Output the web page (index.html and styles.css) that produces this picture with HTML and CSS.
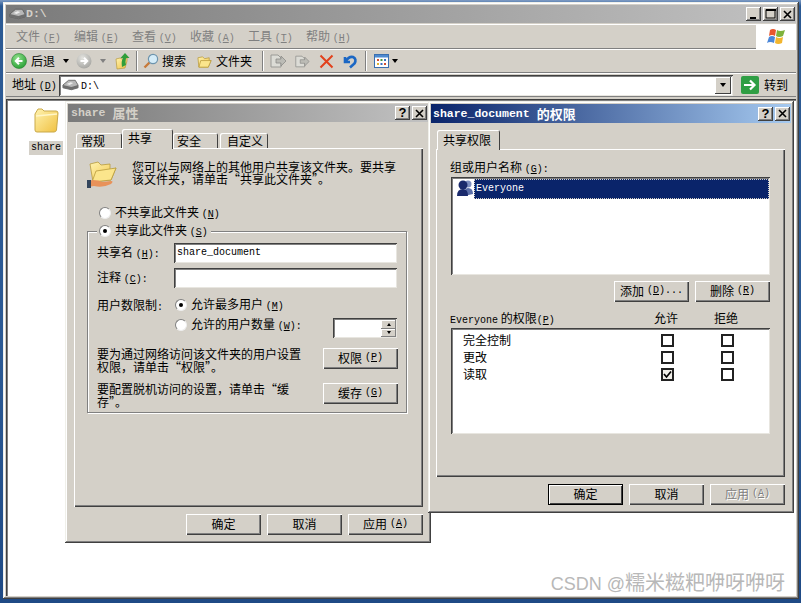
FILE: index.html
```html
<!doctype html>
<html lang="zh-CN">
<head>
    <meta charset="utf-8">
    <meta name="viewport" content="width=device-width, initial-scale=1">
    <title>D:\</title>
    <link rel="stylesheet" href="styles.css">
</head>
<body>
    <svg class="defs" width="0" height="0">
        <defs>
            <linearGradient id="folder-fill" x1="0" y1="0" x2="1" y2="1">
                <stop offset="0" stop-color="#fff3b0"/>
                <stop offset="1" stop-color="#f0c040"/>
            </linearGradient>
            <radialGradient id="green-ball" cx="0.4" cy="0.3" r="0.8">
                <stop offset="0" stop-color="#8fe08a"/>
                <stop offset="1" stop-color="#1f9a2e"/>
            </radialGradient>
            <radialGradient id="grey-ball" cx="0.4" cy="0.3" r="0.8">
                <stop offset="0" stop-color="#e4e4e0"/>
                <stop offset="1" stop-color="#a0a09c"/>
            </radialGradient>
            <symbol id="drive" viewBox="0 0 18 12">
                <path d="M1 6 L7 1 L14 1 L17 6 L17 9 L10 11 L1 9 Z" fill="#b8b8b8" stroke="#555" stroke-width=".8"/>
                <path d="M1 6 L10 8 L17 6 L17 9 L10 11 L1 9 Z" fill="#6e6e6e"/>
                <path d="M5 5 L9 3 L12 4 L8 6 Z" fill="#eee"/>
            </symbol>
            <symbol id="open-folder" viewBox="0 0 16 16">
                <path d="M1 4 L6 3 L8 5 L13 4 L13 7 L15 7 L12 14 L2 14 Z" fill="url(#folder-fill)" stroke="#b89a3c" stroke-width=".8"/>
                <path d="M2 14 L4 7 L15 7 L12 14 Z" fill="#fbe58c" stroke="#b89a3c" stroke-width=".8"/>
            </symbol>
            <symbol id="page-arrow" viewBox="0 0 18 16">
                <path d="M2 2 H9 L12 5 V14 H2 Z" fill="#dcdcd6" stroke="#9a9a96"/>
                <path d="M7 6 H12 V3 L17 8 L12 13 V10 H7 Z" fill="#bcbcb6" stroke="#8c8c88" stroke-width=".8"/>
            </symbol>
        </defs>
    </svg>

    <main class="desktop">
        <section class="explorer">
            <header class="title title-off">
                <svg class="title-icon" width="17" height="12"><use href="#drive"/></svg>
                <span class="title-latin">D:\</span>
                <div class="caption-btns">
                    <span class="cap"><svg width="9" height="9"><rect x="1" y="7" width="6" height="2" fill="#000"/></svg></span>
                    <span class="cap"><svg width="11" height="10"><rect x="1" y="1" width="9" height="8" fill="none" stroke="#000"/><rect x="1" y="0" width="10" height="2" fill="#000"/></svg></span>
                    <span class="cap"><svg width="10" height="9"><path d="M1 1 L8 8 M8 1 L1 8" stroke="#000" stroke-width="1.6"/></svg></span>
                </div>
            </header>

            <nav class="menubar">
                <span class="menu-item">文件 <span class="k">(<u>F</u>)</span></span>
                <span class="menu-item">编辑 <span class="k">(<u>E</u>)</span></span>
                <span class="menu-item">查看 <span class="k">(<u>V</u>)</span></span>
                <span class="menu-item">收藏 <span class="k">(<u>A</u>)</span></span>
                <span class="menu-item">工具 <span class="k">(<u>T</u>)</span></span>
                <span class="menu-item">帮助 <span class="k">(<u>H</u>)</span></span>
                <div class="logo-box">
                    <svg width="20" height="18" viewBox="0 0 20 18">
                        <path d="M4 2 Q7 0 10 2 L9 8 Q6 6 3 8 Z" fill="#e8562c"/>
                        <path d="M11 2 Q14 4 19 2 L17 8 Q13 10 10 8 Z" fill="#7fb23a"/>
                        <path d="M3 9 Q6 7 9 9 L8 15 Q4 13 1 15 Z" fill="#4a86d8"/>
                        <path d="M10 9 Q13 11 17 9 L16 15 Q12 17 9 15 Z" fill="#f2b52e"/>
                    </svg>
                </div>
            </nav>

            <div class="toolbar">
                <svg class="t-back" width="16" height="16" viewBox="0 0 16 16"><circle cx="8" cy="8" r="7.5" fill="url(#green-ball)" stroke="#2a7f30" stroke-width=".6"/><path d="M11.5 8 H5 M8 4.8 L4.8 8 L8 11.2" fill="none" stroke="#fff" stroke-width="2"/></svg>
                <span class="t-label">后退</span>
                <span class="arrow t-back-arrow"></span>
                <svg class="t-forward" width="16" height="16" viewBox="0 0 16 16"><circle cx="8" cy="8" r="7.5" fill="url(#grey-ball)"/><path d="M4.5 8 H11 M8 4.8 L11.2 8 L8 11.2" fill="none" stroke="#fff" stroke-width="2"/></svg>
                <span class="arrow arrow-off t-forward-arrow"></span>
                <svg class="t-up" width="15" height="18" viewBox="0 0 15 18"><path d="M1 7 L5 6 L7 7 L12 6 L12 9 L10 16 L2 17 Z" fill="url(#folder-fill)" stroke="#b89a3c" stroke-width=".7"/><path d="M7 15 Q6 9 8 6 L5.500 6 L10 1 L14.500 6 L11 6 Q10 10 11 13 Z" fill="#2f9e3a"/></svg>
                <span class="sep t-sep-1"></span>
                <svg class="t-search" width="16" height="16" viewBox="0 0 16 16"><path d="M1.5 14.5 L6.5 9.5" stroke="#c77a3a" stroke-width="2.4"/><circle cx="10" cy="6" r="4.6" fill="#d5ecf8" stroke="#6d94ad" stroke-width="1.2"/></svg>
                <span class="t-label t-search-label">搜索</span>
                <svg class="t-folders" width="15" height="15"><use href="#open-folder"/></svg>
                <span class="t-label t-folders-label">文件夹</span>
                <span class="sep t-sep-2"></span>
                <svg class="t-move" width="18" height="16"><use href="#page-arrow"/></svg>
                <svg class="t-copy" width="16" height="15"><use href="#page-arrow"/></svg>
                <svg class="t-delete" width="15" height="15" viewBox="0 0 15 15"><path d="M1.5 1.5 L13.5 13.5 M13.5 1.5 L1.5 13.5" stroke="#e2411c" stroke-width="2"/></svg>
                <svg class="t-undo" width="16" height="15" viewBox="0 0 16 15"><path d="M3 3 L3 8 L8 8 M3.5 7.5 Q7 2 11 3 Q15 5 12.5 9.5 L8 13.5" fill="none" stroke="#1b67c4" stroke-width="2.6"/></svg>
                <span class="sep t-sep-3"></span>
                <svg class="t-views" width="15" height="14" viewBox="0 0 15 14"><rect x=".5" y=".5" width="14" height="13" fill="#fff" stroke="#3a6fb0"/><rect x="1" y="1" width="13" height="2.5" fill="#4d8ad0"/><path d="M3 5h2v2H3z" fill="#d05030"/><path d="M6.5 5h2v2h-2z" fill="#4a9a40"/><path d="M10 5h2v2h-2z" fill="#3a70c0"/><path d="M3 9h2v2H3z" fill="#e0b030"/><path d="M6.5 9h2v2h-2z" fill="#3a70c0"/><path d="M10 9h2v2h-2z" fill="#d05030"/></svg>
                <span class="arrow t-views-arrow"></span>
            </div>

            <div class="addressbar">
                <span class="address-label">地址 <span class="k">(<u>D</u>)</span></span>
                <div class="address-input sunken">
                    <svg width="17" height="12"><use href="#drive"/></svg>
                    <span class="latin">D:\</span>
                    <span class="combo-btn"><span class="arrow"></span></span>
                </div>
                <svg class="go-icon" width="18" height="18" viewBox="0 0 18 18"><rect width="18" height="18" rx="2" fill="#2f9e44"/><path d="M3 9 H13 M9 4.5 L13.5 9 L9 13.5" fill="none" stroke="#fff" stroke-width="2.2"/></svg>
                <span class="go-label">转到</span>
            </div>

            <div class="files">
                <div class="file">
                    <svg width="26" height="25" viewBox="0 0 26 25">
                        <path d="M2 6 L2 22 Q2 24 4 24 L21 24 Q23 24 23.500 22 L25 5 Q25 3 23 3 L11 3 L9 1 L5 1 Z" fill="url(#folder-fill)" stroke="#c9a94a"/>
                        <path d="M3 8 L24 6" stroke="#fff6c8" stroke-width="1.500"/>
                    </svg>
                    <span class="file-name latin">share</span>
                </div>
            </div>
        </section>

        <section class="dialog dialog-props">
            <header class="title title-off">
                <span class="title-latin">share</span><span class="title-cjk">属性</span>
                <div class="caption-btns">
                    <span class="cap cap-help">?</span>
                    <span class="cap"><svg width="10" height="9"><path d="M1 1 L8 8 M8 1 L1 8" stroke="#000" stroke-width="1.6"/></svg></span>
                </div>
            </header>
            <div class="dialog-body">
                <div class="tabs">
                    <span class="tab tab-general">常规</span>
                    <span class="tab tab-on">共享</span>
                    <span class="tab tab-safe">安全</span>
                    <span class="tab tab-custom">自定义</span>
                </div>
                <div class="panel">
                    <div class="intro">
                        <svg width="30" height="28" viewBox="0 0 30 28">
                            <path d="M3 4 L11 2 L14 5 L23 4 L23 10 L29 8 L24 20 L6 22 Z" fill="url(#folder-fill)" stroke="#b89a3c" stroke-width=".8"/>
                            <path d="M5 22 L9 11 L29 8 L24 20 Z" fill="#fbe58c" stroke="#b89a3c" stroke-width=".8"/>
                            <path d="M1 21 L6 20 Q12 20 15 22 L24 21 Q27 21 24 24 Q16 28 7 26 L1 27 Z" fill="#e8925a"/>
                            <rect x="0" y="20" width="4" height="8" fill="#34465c"/>
                        </svg>
                        <p>您可以与网络上的其他用户共享该文件夹。要共享<br>该文件夹，请单击“共享此文件夹”。</p>
                    </div>
                    <div class="radio-row radio-none">
                        <span class="radio"></span>
                        <span class="radio-text">不共享此文件夹 <span class="k">(<u>N</u>)</span></span>
                    </div>
                    <div class="group">
                        <div class="legend radio-row">
                            <span class="radio radio-on"></span>
                            <span class="radio-text">共享此文件夹 <span class="k">(<u>S</u>)</span></span>
                        </div>
                        <div class="field">
                            <label>共享名 <span class="k">(<u>H</u>):</span></label>
                            <span class="input sunken latin">share_document</span>
                        </div>
                        <div class="field">
                            <label>注释 <span class="k">(<u>C</u>):</span></label>
                            <span class="input sunken"></span>
                        </div>
                        <div class="limits">
                            <span class="limits-label">用户数限制<span class="k">:</span></span>
                            <div class="limits-options">
                                <div class="radio-row">
                                    <span class="radio radio-on"></span>
                                    <span class="radio-text">允许最多用户 <span class="k">(<u>M</u>)</span></span>
                                </div>
                                <div class="limit-count">
                                    <div class="radio-row">
                                        <span class="radio"></span>
                                        <span class="radio-text">允许的用户数量 <span class="k">(<u>W</u>):</span></span>
                                    </div>
                                    <div class="spin sunken">
                                        <div class="spin-btns">
                                            <span class="spin-btn"><span class="arrow arrow-up"></span></span>
                                            <span class="spin-btn"><span class="arrow"></span></span>
                                        </div>
                                    </div>
                                </div>
                            </div>
                        </div>
                        <div class="note note-perm">
                            <p>要为通过网络访问该文件夹的用户设置<br>权限，请单击“权限”。</p>
                            <button class="btn">权限 <span class="k">(<u>P</u>)</span></button>
                        </div>
                        <div class="note note-cache">
                            <p>要配置脱机访问的设置，请单击“缓<br>存”。</p>
                            <button class="btn">缓存 <span class="k">(<u>G</u>)</span></button>
                        </div>
                    </div>
                </div>
                <footer class="dialog-btns">
                    <button class="btn">确定</button>
                    <button class="btn">取消</button>
                    <button class="btn">应用 <span class="k">(<u>A</u>)</span></button>
                </footer>
            </div>
        </section>

        <section class="dialog dialog-perm">
            <header class="title title-on">
                <span class="title-latin">share_document</span><span class="title-cjk">的权限</span>
                <div class="caption-btns">
                    <span class="cap cap-help">?</span>
                    <span class="cap"><svg width="10" height="9"><path d="M1 1 L8 8 M8 1 L1 8" stroke="#000" stroke-width="1.6"/></svg></span>
                </div>
            </header>
            <div class="dialog-body">
                <div class="tabs">
                    <span class="tab tab-on tab-single">共享权限</span>
                </div>
                <div class="panel panel-perm">
                    <div class="perm-label">组或用户名称 <span class="k">(<u>G</u>):</span></div>
                    <div class="user-list sunken">
                        <svg width="18" height="18" viewBox="0 0 18 18">
                            <circle cx="12" cy="5" r="3.500" fill="#7d8fc0"/>
                            <path d="M8 17 Q8 9 12 9 Q17 9 17 15 Z" fill="#5a6ea8"/>
                            <circle cx="7" cy="6" r="4.500" fill="#1a2a6c"/>
                            <path d="M1 17 Q1 10 7 10 Q12 10 12 17 Z" fill="#1a2a6c"/>
                        </svg>
                        <span class="user-row latin">Everyone</span>
                    </div>
                    <div class="list-btns">
                        <button class="btn">添加 <span class="k">(<u>D</u>)...</span></button>
                        <button class="btn">删除 <span class="k">(<u>R</u>)</span></button>
                    </div>
                    <div class="perm-head">
                        <span class="perm-name"><span class="latin">Everyone</span> 的权限<span class="k">(<u>P</u>)</span></span>
                        <span class="perm-col">允许</span>
                        <span class="perm-col">拒绝</span>
                    </div>
                    <div class="perm-list sunken">
                        <div class="perm-row">
                            <span class="perm-name">完全控制</span>
                            <span class="perm-col"><span class="check"></span></span>
                            <span class="perm-col"><span class="check"></span></span>
                        </div>
                        <div class="perm-row">
                            <span class="perm-name">更改</span>
                            <span class="perm-col"><span class="check"></span></span>
                            <span class="perm-col"><span class="check"></span></span>
                        </div>
                        <div class="perm-row">
                            <span class="perm-name">读取</span>
                            <span class="perm-col">
                                <span class="check check-on"><svg width="9" height="9" viewBox="0 0 9 9"><path d="M1 4 L3.500 7 L8 1.500" fill="none" stroke="#000" stroke-width="1.700"/></svg></span>
                            </span>
                            <span class="perm-col"><span class="check"></span></span>
                        </div>
                    </div>
                </div>
                <footer class="dialog-btns">
                    <button class="btn btn-default">确定</button>
                    <button class="btn">取消</button>
                    <button class="btn btn-off">应用 <span class="k">(<u>A</u>)</span></button>
                </footer>
            </div>
        </section>

        <div class="watermark"><span class="watermark-latin">CSDN @</span>糯米糍粑咿呀咿呀</div>
    </main>
</body>
</html>
```

FILE: styles.css
```css
* {
    box-sizing: border-box;
}
html, body {
    margin: 0;
    height: 100%;
}
body {
    overflow: hidden;
    background: #2c5a94;
    font-family: "Noto Sans CJK SC", "Liberation Sans", sans-serif;
    font-size: 12px;
    line-height: 14px;
    color: #000;
}
p {
    margin: 0;
    white-space: nowrap;
}
.defs {
    position: absolute;
}
.desktop {
    position: relative;
    width: 801px;
    height: 603px;
    background: linear-gradient(#7f9cc4, #2c5a94 1%, #2c5a94 60%, #1f4a85);
}

/* small latin text, half the width of a hanzi */
.k, .latin {
    font-family: "Liberation Mono", monospace;
    font-size: 10px;
    line-height: 10px;
}

/* windows */
.explorer, .dialog {
    position: absolute;
    display: flex;
    flex-direction: column;
    padding: 3px;
    background: #d4d0c8;
    box-shadow: inset -1px -1px 0 #404040, inset 1px 1px 0 #f0f0ea, inset -2px -2px 0 #808080, inset 2px 2px 0 #fff;
}
.explorer {
    left: 3px;
    top: 2px;
    width: 796px;
    height: 597px;
}
.dialog-props {
    left: 65px;
    top: 101px;
    width: 366px;
    height: 442px;
}
.dialog-perm {
    left: 428px;
    top: 101px;
    width: 366px;
    height: 412px;
}

/* title bars */
.title {
    flex: none;
    display: flex;
    align-items: center;
    height: 18px;
    padding-left: 3px;
    font-weight: bold;
}
.title-off {
    background: linear-gradient(90deg, #7a7a7a, #c2c2c2);
    color: #d4d0c8;
}
.title-on {
    height: 19px;
    padding-left: 2px;
    background: linear-gradient(90deg, #0a246a, #a6caf0);
    color: #fff;
}
.title-latin {
    font-family: "Liberation Mono", monospace;
    font-size: 11.5px;
}
.title-cjk {
    margin-left: 7px;
    font-size: 13px;
}
.caption-btns {
    display: flex;
    gap: 2px;
    margin-left: auto;
    padding-right: 1px;
}
.cap {
    display: flex;
    align-items: center;
    justify-content: center;
    width: 15px;
    height: 14px;
    background: #d4d0c8;
    box-shadow: inset -1px -1px 0 #404040, inset 1px 1px 0 #fff, inset -2px -2px 0 #808080;
}
.cap-help {
    font-family: "Liberation Sans", sans-serif;
    font-size: 13px;
    color: #000;
}

/* menu bar */
.menubar {
    flex: none;
    display: flex;
    align-items: center;
    height: 25px;
    padding-left: 10px;
    margin-top: 1px;
    border-top: 1px solid #fff;
    border-bottom: 1px solid #808080;
    color: #808080;
}
.menu-item {
    width: 58px;
    white-space: nowrap;
}
.logo-box {
    display: flex;
    align-items: center;
    justify-content: center;
    width: 40px;
    height: 24px;
    margin-left: auto;
    background: #fff;
}

/* tool bar */
.toolbar {
    flex: none;
    display: flex;
    align-items: center;
    height: 24px;
    padding-left: 5px;
    border-top: 1px solid #fff;
    border-bottom: 1px solid #808080;
}
.t-label {
    margin-left: 4px;
    white-space: nowrap;
}
.arrow {
    display: inline-block;
    width: 0;
    height: 0;
    border-left: 3.5px solid transparent;
    border-right: 3.5px solid transparent;
    border-top: 4px solid #000;
}
.arrow-off {
    border-left-width: 3px;
    border-right-width: 3px;
    border-top-color: #808080;
}
.arrow-up {
    border-top: 0;
    border-bottom: 3px solid #000;
    border-left-width: 2.5px;
    border-right-width: 2.5px;
}
.spin-btn .arrow:not(.arrow-up) {
    border-top-width: 3px;
    border-left-width: 2.5px;
    border-right-width: 2.5px;
}
.sep {
    width: 2px;
    height: 20px;
    background: #808080;
    border-right: 1px solid #fff;
}
.t-back-arrow { margin-left: 8px; }
.t-forward { margin-left: 7px; }
.t-forward-arrow { margin-left: 8px; }
.t-up { margin-left: 9px; }
.t-sep-1 { margin-left: 6px; }
.t-search { margin-left: 5px; }
.t-search-label { margin-left: 3px; }
.t-folders { margin-left: 11px; }
.t-folders-label { margin-left: 4px; }
.t-sep-2 { margin-left: 10px; }
.t-move { margin-left: 5px; }
.t-copy { margin-left: 7px; }
.t-delete { margin-left: 9px; }
.t-undo { margin-left: 8px; }
.t-sep-3 { margin-left: 7px; }
.t-views { margin-left: 7px; }
.t-views-arrow { margin-left: 3px; }

/* address bar */
.addressbar {
    flex: none;
    display: flex;
    align-items: center;
    height: 24px;
    padding-left: 6px;
    border-top: 1px solid #fff;
    border-bottom: 1px solid #808080;
}
.address-label {
    width: 47px;
    padding-bottom: 2px;
    white-space: nowrap;
}
.sunken {
    background: #fff;
    box-shadow: inset 1px 1px 0 #404040, inset -1px -1px 0 #e8e6e0, inset 2px 2px 0 #808080;
}
.address-input {
    display: flex;
    align-items: center;
    gap: 2px;
    width: 674px;
    height: 21px;
    padding: 0 2px 0 3px;
}
.address-input .latin {
    padding-top: 3px;
}
.combo-btn {
    display: flex;
    align-items: center;
    justify-content: center;
    width: 16px;
    height: 17px;
    margin-left: auto;
    background: #d4d0c8;
    box-shadow: inset -1px -1px 0 #404040, inset 1px 1px 0 #fff;
}
.go-icon {
    margin-left: 8px;
}
.go-label {
    margin-left: 5px;
}

/* file view */
.files {
    flex: 1;
    margin-top: 2px;
    padding: 9px 0 0 23px;
    background: #fff;
    box-shadow: inset 1px 1px 0 #404040, inset 2px 2px 0 #808080;
}
.file {
    display: flex;
    flex-direction: column;
    align-items: center;
    width: 34px;
}
.file-name {
    width: 34px;
    height: 14px;
    margin-top: 8px;
    background: #d4d0c8;
    text-align: center;
    line-height: 14px;
}

/* dialog frame */
.dialog-body {
    flex: 1;
    display: flex;
    flex-direction: column;
    min-height: 0;
    padding: 7px 5px 5px 5px;
}
.dialog-props .dialog-body {
    padding-left: 6px;
}
.dialog-perm .dialog-body {
    padding-right: 6px;
}
.tabs {
    flex: none;
    display: flex;
    align-items: flex-end;
    height: 19px;
}
.tab {
    display: flex;
    align-items: center;
    height: 15px;
    background: #d4d0c8;
    border-radius: 2px 2px 0 0;
    box-shadow: inset 1px 1px 0 #fff, inset -1px 0 0 #404040;
}
.tab-general {
    width: 46px;
    margin-left: 2px;
    padding-left: 5px;
}
.tab-on {
    position: relative;
    z-index: 1;
    width: 51px;
    height: 20px;
    margin-bottom: -1px;
    padding: 0 0 2px 6px;
}
.tab-safe {
    width: 45px;
    padding-left: 4px;
}
.tab-custom {
    width: 48px;
    margin-left: 2px;
    padding-left: 7px;
}
.tab-single {
    width: 63px;
    margin-left: 1px;
    padding-bottom: 1px;
}
.panel {
    flex: 1;
    padding: 1px;
    box-shadow: inset 1px 1px 0 #fff, inset -1px -1px 0 #404040, inset -2px -2px 0 #808080;
}
.dialog-btns {
    flex: none;
    display: flex;
    justify-content: flex-end;
    gap: 6px;
    margin-top: 7px;
}
.btn {
    display: flex;
    align-items: center;
    justify-content: center;
    gap: 3px;
    width: 75px;
    height: 21px;
    padding: 0 0 2px;
    border: 0;
    background: #d4d0c8;
    font: inherit;
    color: #000;
    box-shadow: inset 1px 1px 0 #fff, inset -1px -1px 0 #404040, inset -2px -2px 0 #808080;
}
.btn-default {
    box-shadow: inset 0 0 0 1px #000, inset 2px 2px 0 #fff, inset -2px -2px 0 #404040;
}
.btn-off {
    color: #808080;
    text-shadow: 1px 1px 0 #fff;
}

/* radios and checks */
.radio-row {
    display: flex;
    align-items: center;
    gap: 4px;
    height: 14px;
    white-space: nowrap;
}
.radio-text {
    margin-bottom: 2px;
}
.radio {
    flex: none;
    display: flex;
    align-items: center;
    justify-content: center;
    width: 12px;
    height: 12px;
    border-radius: 50%;
    background: #fff;
    border: 1px solid;
    border-color: #808080 #eee #eee #808080;
}
.radio-on::after {
    content: "";
    width: 4px;
    height: 4px;
    border-radius: 50%;
    background: #000;
}
.check {
    display: inline-flex;
    align-items: center;
    justify-content: center;
    width: 13px;
    height: 13px;
    border: 2px solid #222;
    background: #fff;
    vertical-align: middle;
}
.check-on {
    background: #f0eee8;
}

/* share tab */
.intro {
    display: flex;
    gap: 15px;
    margin: 11px 0 0 12px;
}
.intro p {
    padding-top: 1px;
    line-height: 12px;
}
.radio-none {
    margin: 18px 0 0 24px;
}
.group {
    height: 182px;
    width: 320px;
    margin: 11px 0 0 12px;
    border: 1px solid #808080;
    box-shadow: 1px 1px 0 #fff, inset 1px 1px 0 #fff;
}
.legend {
    width: 114px;
    height: 14px;
    margin: -8px 0 1px 9px;
    padding-left: 2px;
    background: #d4d0c8;
}
.field {
    display: flex;
    align-items: center;
    height: 20px;
    margin-top: 5px;
    padding-left: 9px;
    white-space: nowrap;
}
.field label {
    width: 77px;
    margin-bottom: 1px;
}
.input {
    width: 223px;
    height: 20px;
    padding: 0 3px;
    line-height: 20px;
}
.limits {
    display: flex;
    margin-top: 10px;
    padding: 0 9px;
}
.limits-label {
    width: 77px;
    white-space: nowrap;
}
.limits-options {
    flex: 1;
    margin-left: 1px;
}
.limit-count {
    display: flex;
    justify-content: space-between;
    margin-top: 6px;
}
.spin {
    display: flex;
    justify-content: flex-end;
    width: 64px;
    height: 20px;
    padding: 2px 1px 1px;
}
.spin-btns {
    display: flex;
    flex-direction: column;
    width: 15px;
}
.spin-btn {
    flex: 1;
    display: flex;
    align-items: center;
    justify-content: center;
    background: #d4d0c8;
    box-shadow: inset -1px -1px 0 #808080, inset 1px 1px 0 #fff;
}
.note {
    display: flex;
    justify-content: space-between;
    padding: 0 8px 0 9px;
    line-height: 13px;
}
.note p {
    margin-top: -1px;
    line-height: 13px;
}
.note-perm {
    margin-top: 10px;
}
.note-cache {
    margin-top: 10px;
}

/* permissions dialog */
.panel-perm {
    padding: 12px 14px 0 14px;
}
.perm-label {
    margin-top: -1px;
}
.user-list {
    display: flex;
    align-items: flex-start;
    width: 319px;
    height: 98px;
    margin: 2px 0 0 1px;
    padding: 2px 1px 0 5px;
}
.user-row {
    flex: 1;
    height: 20px;
    padding-left: 2px;
    background: #0a246a;
    outline: 1px dotted #d4d0c8;
    outline-offset: -1px;
    color: #fff;
    line-height: 20px;
}
.list-btns {
    display: flex;
    justify-content: flex-end;
    gap: 6px;
    margin-top: 6px;
    width: 320px;
}
.perm-head, .perm-row {
    display: flex;
    align-items: center;
}
.perm-head {
    width: 320px;
    height: 14px;
    margin-top: 9px;
    padding-right: 14px;
}
.perm-name {
    flex: 1;
    white-space: nowrap;
}
.perm-row .perm-name {
    margin-bottom: 2px;
}
.perm-col {
    flex: none;
    display: flex;
    justify-content: center;
    width: 60px;
}
.perm-list {
    width: 319px;
    height: 106px;
    margin: 3px 0 0 1px;
    padding: 4px 13px 0 12px;
}
.perm-row {
    height: 17px;
}

.watermark {
    position: absolute;
    right: 16px;
    bottom: 7px;
    font-size: 20px;
    line-height: 24px;
    color: #b8b8b8;
    white-space: nowrap;
}
.watermark-latin {
    font-family: "Liberation Sans", sans-serif;
    font-size: 18px;
}
```
